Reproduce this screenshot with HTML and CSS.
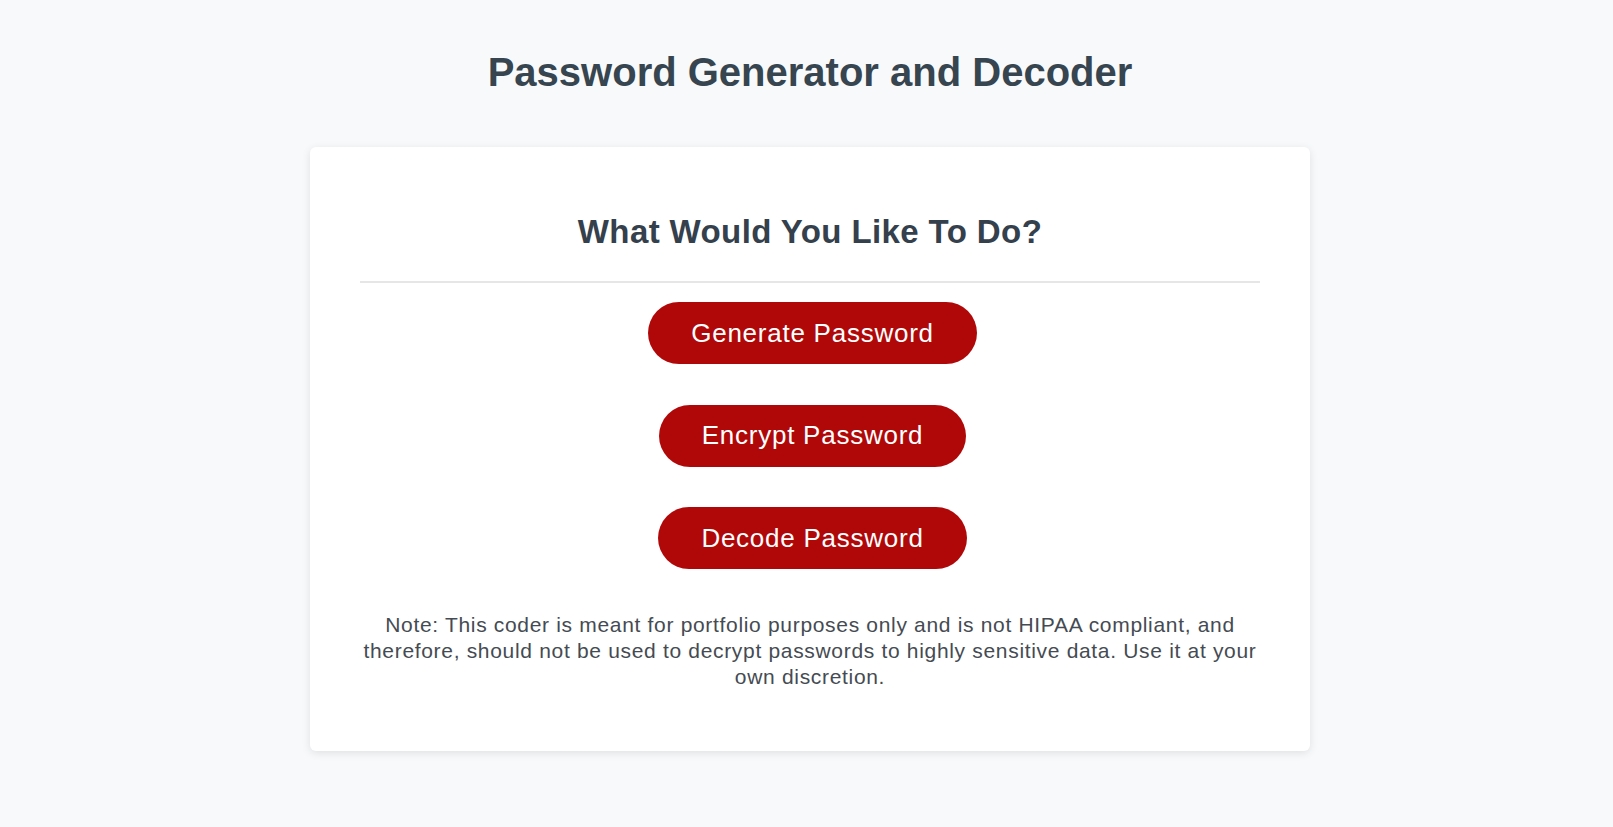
FILE: index.html
```html
<!DOCTYPE html>
<html lang="en">
<head>
<meta charset="utf-8">
<title>Password Generator and Decoder</title>
<link rel="stylesheet" href="styles.css">
</head>
<body>
  <h1 class="page-title">Password Generator and Decoder</h1>
  <main class="card">
    <h2 class="card-title">What Would You Like To Do?</h2>
    <hr class="divider">
    <div class="actions">
      <button class="btn" type="button">Generate Password</button>
      <button class="btn" type="button">Encrypt Password</button>
      <button class="btn" type="button">Decode Password</button>
    </div>
    <p class="note">Note: This coder is meant for portfolio purposes only and is not HIPAA compliant, and therefore, should not be used to decrypt passwords to highly sensitive data. Use it at your own discretion.</p>
  </main>
</body>
</html>
```
FILE: styles.css
```css
* { box-sizing: border-box; }
html, body { margin: 0; padding: 0; }
body {
  background: #f8f9fa;
  font-family: "Liberation Sans", Arial, sans-serif;
  color: #34495e;
  padding: 49px 0 20px 7px;
}
.page-title {
  margin: 0 0 52px;
  text-align: center;
  font-size: 40px;
  line-height: 46px;
  font-weight: 700;
  color: #36454f;
}
.card {
  width: 1000px;
  margin: 0 auto;
  background: #ffffff;
  border-radius: 6px;
  box-shadow: 0 2px 8px rgba(0, 0, 0, 0.1);
  padding: 66px 50px 61px;
}
.card-title {
  margin: 0;
  text-align: center;
  font-size: 33px;
  line-height: 38px;
  letter-spacing: 0.4px;
  font-weight: 700;
  color: #34404c;
}
.divider {
  border: 0;
  height: 2px;
  background: #e6e6e6;
  margin: 30px 0 19px;
}
.actions {
  display: flex;
  flex-direction: column;
  align-items: center;
  gap: 40.5px;
  padding-left: 5px;
}
.btn {
  height: 62px;
  padding: 0 43px;
  border: 0;
  border-radius: 31px;
  background: #b00808;
  color: #ffffff;
  font-family: "Liberation Sans", Arial, sans-serif;
  font-size: 26px;
  letter-spacing: 0.75px;
  cursor: pointer;
}
.note {
  margin: 43px 0 0;
  text-align: center;
  font-size: 21px;
  line-height: 26px;
  letter-spacing: 0.68px;
  color: #454b52;
}
```
